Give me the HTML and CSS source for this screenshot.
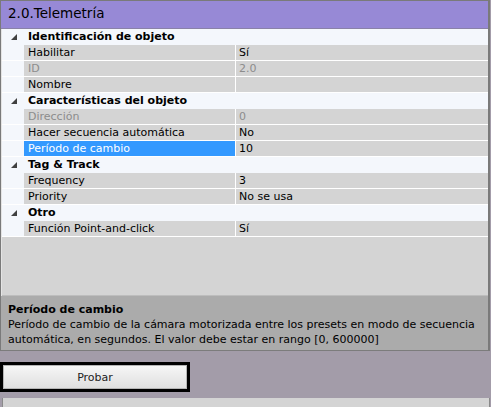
FILE: index.html
```html
<!DOCTYPE html>
<html>
<head>
<meta charset="utf-8">
<link rel="stylesheet" href="styles.css">
</head>
<body>
<div class="panel">
  <div class="header">2.0.Telemetría</div>
  <div class="grid">
    <div class="cat"><span class="gut"><svg width="6" height="6" viewBox="0 0 6 6"><polygon points="0,6 6,6 6,0" fill="#404040"/></svg></span><span class="catname">Identificación de objeto</span></div>
    <div class="row"><span class="gut"></span><span class="name">Habilitar</span><span class="val">Sí</span></div>
    <div class="row dis"><span class="gut"></span><span class="name">ID</span><span class="val">2.0</span></div>
    <div class="row"><span class="gut"></span><span class="name">Nombre</span><span class="val"></span></div>
    <div class="cat"><span class="gut"><svg width="6" height="6" viewBox="0 0 6 6"><polygon points="0,6 6,6 6,0" fill="#404040"/></svg></span><span class="catname">Características del objeto</span></div>
    <div class="row dis"><span class="gut"></span><span class="name">Dirección</span><span class="val">0</span></div>
    <div class="row"><span class="gut"></span><span class="name">Hacer secuencia automática</span><span class="val">No</span></div>
    <div class="row sel"><span class="gut"></span><span class="name">Período de cambio</span><span class="val">10</span></div>
    <div class="cat"><span class="gut"><svg width="6" height="6" viewBox="0 0 6 6"><polygon points="0,6 6,6 6,0" fill="#404040"/></svg></span><span class="catname">Tag &amp; Track</span></div>
    <div class="row"><span class="gut"></span><span class="name">Frequency</span><span class="val">3</span></div>
    <div class="row"><span class="gut"></span><span class="name">Priority</span><span class="val">No se usa</span></div>
    <div class="cat"><span class="gut"><svg width="6" height="6" viewBox="0 0 6 6"><polygon points="0,6 6,6 6,0" fill="#404040"/></svg></span><span class="catname">Otro</span></div>
    <div class="row"><span class="gut"></span><span class="name">Función Point-and-click</span><span class="val">Sí</span></div>
    <div class="empty"></div>
  </div>
  <div class="desc">
    <div class="desc-title">Período de cambio</div>
    <div class="desc-text">Período de cambio de la cámara motorizada entre los presets en modo de secuencia automática, en segundos. El valor debe estar en rango [0, 600000]</div>
  </div>
</div>
<div class="actions">
  <button class="btn">Probar</button>
</div>
<div class="bottom"></div>
</body>
</html>
```
FILE: styles.css
```css
html, body {
  margin: 0;
  padding: 0;
}
body {
  width: 491px;
  height: 407px;
  overflow: hidden;
  background: #a39ca9;
  font-family: "DejaVu Sans", sans-serif;
  font-size: 11px;
  color: #000;
}
.panel {
  width: 487px;
  border-left: 1px solid #7a7a7a;
  border-top: 1px solid #7a7a7a;
  border-right: 2px solid #7a7a7a;
  border-bottom: 1px solid #7c7c7c;
  background: #d4d4d4;
}
.header {
  height: 28px;
  line-height: 25px;
  background: #9789d6;
  border-bottom: 1px solid #8a82a8;
  padding-left: 7px;
  font-size: 13.5px;
  color: #000;
  box-sizing: border-box;
}
.grid {
  background: #d4d4d4;
  border-left: 1px solid #e4e4e4;
}
.cat, .row {
  display: flex;
  height: 15px;
  line-height: 16px;
  border-bottom: 1px solid #ffffff;
}
.cat {
  background: #f4f7fc;
  border-bottom-color: #f4f7fc;
}
.gut {
  width: 22px;
  flex: none;
  background: #f4f7fc;
  display: flex;
  align-items: center;
  justify-content: center;
  padding-left: 2px;
  box-sizing: border-box;
}
.catname {
  padding-left: 4px;
  font-weight: bold;
}
.name {
  width: 212px;
  flex: none;
  padding-left: 4px;
  box-sizing: border-box;
  border-right: 1px solid #ffffff;
  white-space: nowrap;
}
.val {
  flex: 1;
  padding-left: 3px;
}
.dis .name, .dis .val {
  color: #8c8c8c;
}
.sel .name {
  background: #3399ff;
  color: #ffffff;
}
.empty {
  height: 58px;
  background: #d4d4d4;
  border-bottom: 1px solid #bdbdbd;
}
.desc {
  background: #ababab;
  padding: 6px 8px 3px 7px;
  line-height: 15px;
}
.desc-title {
  font-weight: bold;
}
.actions {
  padding-top: 11px;
  height: 36px;
}
.btn {
  display: block;
  width: 190px;
  height: 30px;
  margin: 0;
  padding: 0;
  border: 3px solid #000;
  background: linear-gradient(#f7f7f7, #dedede);
  box-shadow: inset 0 0 0 1px #b5b5b5;
  font-family: "DejaVu Sans", sans-serif;
  font-size: 11px;
  color: #222;
}
.bottom {
  margin-left: 2px;
  width: 486px;
  height: 20px;
  background: #d4d4d4;
  border-left: 1px solid #8a8a8a;
  border-right: 1px solid #8a8a8a;
}
```
